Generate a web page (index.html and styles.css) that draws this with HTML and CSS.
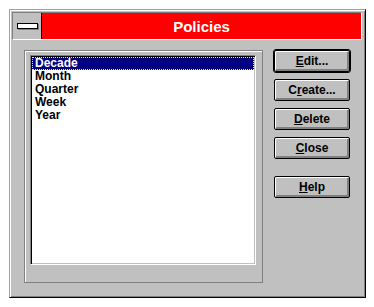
FILE: index.html
```html
<!DOCTYPE html>
<html lang="en">

<head>
  <meta charset="UTF-8">
  <title>Policies</title>
  <link rel="stylesheet" href="styles.css">
</head>

<body>
  <div class="dialog">
    <div class="titleFrame">
      <div class="sysMenu"><span class="sysBar"></span></div>
      <div class="titleText">Policies</div>
    </div>

    <div class="dialogBody">
      <div class="groupBox">
        <ul class="listBox">
          <li class="listItem selected">Decade</li>
          <li class="listItem">Month</li>
          <li class="listItem">Quarter</li>
          <li class="listItem">Week</li>
          <li class="listItem">Year</li>
        </ul>
      </div>

      <div class="btnColumn">
        <button class="dlgBtn defaultBtn"><u>E</u>dit...</button>
        <button class="dlgBtn">C<u>r</u>eate...</button>
        <button class="dlgBtn"><u>D</u>elete</button>
        <button class="dlgBtn"><u>C</u>lose</button>
        <button class="dlgBtn helpBtn"><u>H</u>elp</button>
      </div>
    </div>
  </div>
</body>

</html>
```

FILE: styles.css
```css
body {
  margin: 0;
  padding: 9px;
  background: #ffffff;
  font-family: "Liberation Sans", Arial, sans-serif;
}

.dialog {
  width: 357px;
  height: 289px;
  box-sizing: border-box;
  background: #c0c0c0;
  border: 1px solid #000000;
  border-top-color: #a0a0a0;
  border-left-color: #a0a0a0;
  box-shadow: inset 1px 1px 0 #ffffff, inset -1px -1px 0 #808080;
  padding: 2px 3px 0 2px;
  display: flex;
  flex-direction: column;
}

/* title bar */
.titleFrame {
  display: flex;
  height: 28px;
  box-sizing: border-box;
  border: 1px solid #ffffff;
  border-top-color: #808080;
  border-left-color: #808080;
}

.sysMenu {
  width: 28px;
  border-right: 1px solid #000000;
  display: flex;
  align-items: center;
  justify-content: center;
}

.sysBar {
  width: 19px;
  height: 4px;
  background: #ffffff;
  border: 1px solid #000000;
  box-shadow: 1px 1px 0 #808080;
}

.titleText {
  flex: 1;
  background: #ff0000;
  color: #ffffff;
  font-weight: bold;
  font-size: 15px;
  display: flex;
  align-items: center;
  justify-content: center;
}

/* main area */
.dialogBody {
  display: flex;
  align-items: flex-start;
  margin-top: 10px;
  margin-left: 12px;
}

.groupBox {
  width: 239px;
  height: 233px;
  box-sizing: border-box;
  border: 1px solid #808080;
  box-shadow: inset 1px 1px 0 #ffffff;
  padding: 4px 6px 17px 5px;
}

.listBox {
  list-style: none;
  margin: 0;
  padding: 1px;
  height: 100%;
  box-sizing: border-box;
  background: #ffffff;
  border: 1px solid #ffffff;
  border-top-color: #808080;
  border-left-color: #808080;
  box-shadow: inset 1px 1px 0 #000000, inset -1px -1px 0 #c0c0c0;
}

.listItem {
  height: 13px;
  line-height: 13px;
  padding-left: 3px;
  font-size: 12px;
  font-weight: bold;
  color: #000000;
}

.listItem.selected {
  background: #000080;
  color: #ffffff;
  outline: 1px dotted #ffff00;
  outline-offset: -1px;
}

/* buttons */
.btnColumn {
  display: flex;
  flex-direction: column;
  margin-left: 11px;
}

.dlgBtn {
  width: 76px;
  height: 22px;
  margin: 0 0 7px 0;
  padding: 0;
  background: #c0c0c0;
  border: 1px solid #000000;
  border-radius: 2px;
  box-shadow: inset 1px 1px 0 #ffffff, inset -1px -1px 0 #808080, inset -2px -2px 0 #808080;
  font-family: "Liberation Sans", Arial, sans-serif;
  font-size: 12px;
  font-weight: bold;
  color: #000000;
  cursor: pointer;
}

.defaultBtn {
  outline: 1px solid #000000;
}

.helpBtn {
  margin-top: 10px;
}
```
